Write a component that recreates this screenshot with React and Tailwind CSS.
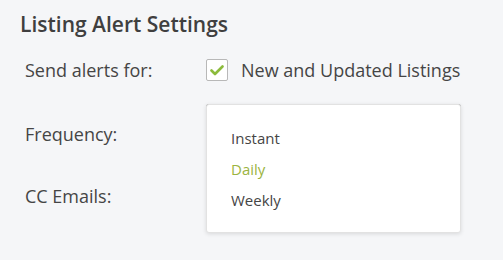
import React from 'react';

const Check = () => (
  <svg width="14" height="11" viewBox="0 0 14 11" fill="none">
    <path d="M1.5 5.5 L5 9 L12.5 1.5" stroke="#8cbb3c" strokeWidth="2.6" strokeLinecap="round" strokeLinejoin="round" />
  </svg>
);

const App = () => (
  <div className="w-[503px] h-[260px] bg-[#f5f6f8] text-[#454545] font-['Open_Sans',sans-serif] overflow-hidden">
    <h2 className="pl-[20px] pt-[10px] text-[21px] font-semibold text-[#3f3f3f] leading-[28px]">Listing Alert Settings</h2>
    <div className="pl-[25px] pt-[21px] flex flex-col">
      <div className="flex items-center h-[22px]">
        <span className="w-[181px] text-[18px] leading-[22px]">Send alerts for:</span>
        <span className="w-[22px] h-[22px] border border-[#b8b8b8] bg-white rounded-[2px] flex items-center justify-center">
          <Check />
        </span>
        <span className="ml-[13px] text-[18px] leading-[22px]">New and Updated Listings</span>
      </div>
      <div className="flex mt-[23px] relative">
        <span className="w-[181px] text-[18px] leading-[22px] pt-[19px]">Frequency:</span>
        <div className="relative">
          <div className="w-[255px] h-[47px] border border-[#b5b5b5] bg-white rounded-[2px]" />
          <div className="absolute left-0 top-0 w-[255px] h-[129px] bg-white border border-[#e2e2e2] rounded-[3px] shadow-[0_1px_4px_rgba(0,0,0,0.12)] z-10 pt-[17px] pl-[24px] text-[15px] flex flex-col">
            <span className="h-[32px] leading-[32px]">Instant</span>
            <span className="h-[31px] leading-[31px] text-[#9bb43f]">Daily</span>
            <span className="h-[31px] leading-[31px]">Weekly</span>
          </div>
        </div>
      </div>
      <div className="flex mt-[27px]">
        <span className="w-[181px] text-[18px] leading-[22px] pt-[7px]">CC Emails:</span>
        <div className="w-[255px] h-[52px] border border-[#b5b5b5] bg-white rounded-[2px]" />
      </div>
    </div>
  </div>
);

export default App;
